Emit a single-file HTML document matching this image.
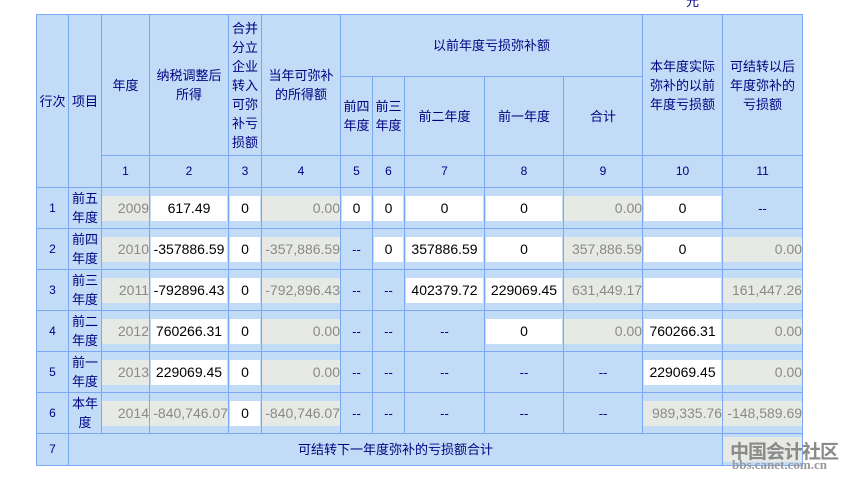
<!DOCTYPE html>
<html><head><meta charset="utf-8"><style>
body{margin:0;background:#fff;width:848px;height:484px;overflow:hidden;position:relative;font-family:"Liberation Sans","Noto Sans CJK SC",sans-serif;}
table{position:absolute;left:36px;top:14px;border-collapse:collapse;table-layout:fixed;width:767px;}
td{border:1px solid #7aa8f2;background:#c2dcf7;color:#000080;font-size:13px;text-align:center;padding:0;line-height:19px;overflow:hidden;white-space:nowrap;}
.b{height:25px;line-height:25px;margin:0;font-size:14px;overflow:hidden;}
.g{background:#e6e9e4;color:#8a8a8a;text-align:right;}
.v{background:#fff;color:#000;margin:0 1px 0 1px;text-align:center;}
.n{font-size:12px;}
.wm{position:absolute;left:730px;top:437px;font-size:19px;font-weight:bold;color:#8a8a8a;letter-spacing:-1px;}
.wm2{position:absolute;left:732px;top:457px;font-size:13px;font-weight:bold;color:#999;font-family:"Liberation Serif",serif;}
</style></head><body>
<div style="position:absolute;left:686px;top:-9px;font-size:13px;color:#000080;">元</div>
<table>
<colgroup><col style="width:32px"><col style="width:33px"><col style="width:48px"><col style="width:79px"><col style="width:33px"><col style="width:79px"><col style="width:32px"><col style="width:32px"><col style="width:80px"><col style="width:79px"><col style="width:79px"><col style="width:80px"><col style="width:80px"></colgroup>
<tr style="height:62px"><td rowspan="3">行次</td><td rowspan="3">项目</td><td rowspan="2">年度</td><td rowspan="2">纳税调整后<br>所得</td><td rowspan="2">合并<br>分立<br>企业<br>转入<br>可弥<br>补亏<br>损额</td><td rowspan="2">当年可弥补<br>的所得额</td><td colspan="5">以前年度亏损弥补额</td><td rowspan="2">本年度实际<br>弥补的以前<br>年度亏损额</td><td rowspan="2">可结转以后<br>年度弥补的<br>亏损额</td></tr>
<tr style="height:79px"><td>前四<br>年度</td><td>前三<br>年度</td><td>前二年度</td><td>前一年度</td><td>合计</td></tr>
<tr style="height:32px"><td class="n">1</td><td class="n">2</td><td class="n">3</td><td class="n">4</td><td class="n">5</td><td class="n">6</td><td class="n">7</td><td class="n">8</td><td class="n">9</td><td class="n">10</td><td class="n">11</td></tr>
<tr style="height:41px"><td class="n">1</td><td>前五<br>年度</td><td><div class="b g">2009</div></td><td><div class="b v">617.49</div></td><td><div class="b v">0</div></td><td><div class="b g">0.00</div></td><td><div class="b v">0</div></td><td><div class="b v">0</div></td><td><div class="b v">0</div></td><td><div class="b v">0</div></td><td><div class="b g">0.00</div></td><td><div class="b v">0</div></td><td>--</td></tr>
<tr style="height:41px"><td class="n">2</td><td>前四<br>年度</td><td><div class="b g">2010</div></td><td><div class="b v">-357886.59</div></td><td><div class="b v">0</div></td><td><div class="b g">-357,886.59</div></td><td>--</td><td><div class="b v">0</div></td><td><div class="b v">357886.59</div></td><td><div class="b v">0</div></td><td><div class="b g">357,886.59</div></td><td><div class="b v">0</div></td><td><div class="b g">0.00</div></td></tr>
<tr style="height:41px"><td class="n">3</td><td>前三<br>年度</td><td><div class="b g">2011</div></td><td><div class="b v">-792896.43</div></td><td><div class="b v">0</div></td><td><div class="b g">-792,896.43</div></td><td>--</td><td>--</td><td><div class="b v">402379.72</div></td><td><div class="b v">229069.45</div></td><td><div class="b g">631,449.17</div></td><td><div class="b v"></div></td><td><div class="b g">161,447.26</div></td></tr>
<tr style="height:41px"><td class="n">4</td><td>前二<br>年度</td><td><div class="b g">2012</div></td><td><div class="b v">760266.31</div></td><td><div class="b v">0</div></td><td><div class="b g">0.00</div></td><td>--</td><td>--</td><td>--</td><td><div class="b v">0</div></td><td><div class="b g">0.00</div></td><td><div class="b v">760266.31</div></td><td><div class="b g">0.00</div></td></tr>
<tr style="height:41px"><td class="n">5</td><td>前一<br>年度</td><td><div class="b g">2013</div></td><td><div class="b v">229069.45</div></td><td><div class="b v">0</div></td><td><div class="b g">0.00</div></td><td>--</td><td>--</td><td>--</td><td>--</td><td>--</td><td><div class="b v">229069.45</div></td><td><div class="b g">0.00</div></td></tr>
<tr style="height:41px"><td class="n">6</td><td>本年<br>度</td><td><div class="b g">2014</div></td><td><div class="b g">-840,746.07</div></td><td><div class="b v">0</div></td><td><div class="b g">-840,746.07</div></td><td>--</td><td>--</td><td>--</td><td>--</td><td>--</td><td><div class="b g">989,335.76</div></td><td><div class="b g">-148,589.69</div></td></tr>
<tr style="height:32px"><td class="n">7</td><td colspan="11">可结转下一年度弥补的亏损额合计</td><td><div class="b g"></div></td></tr>
</table>
<div class="wm">中国会计社区</div>
<div class="wm2">bbs.canet.com.cn</div>
</body></html>
